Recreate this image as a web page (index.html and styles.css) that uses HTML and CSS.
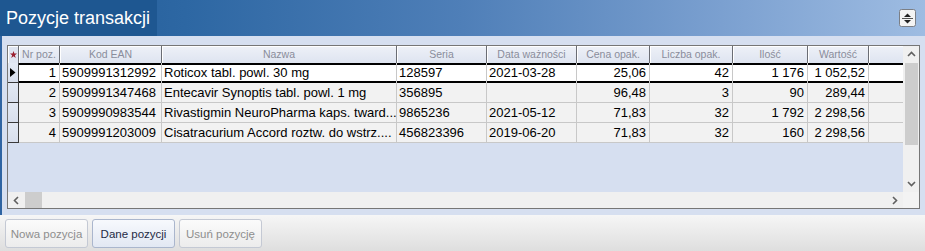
FILE: index.html
```html
<!DOCTYPE html>
<html lang="pl">
<head>
<meta charset="utf-8">
<title>Pozycje transakcji</title>
<link rel="stylesheet" href="styles.css">
</head>
<body>
<div class="window">
  <header class="titlebar">
    <h1 class="title">Pozycje transakcji</h1>
    <button class="toggle" aria-label="Zwiń">
      <svg width="17" height="18" viewBox="0 0 17 18">
        <rect x="0.5" y="0.5" width="16" height="17" rx="2" fill="#f4f4f4" stroke="#7b7f86"/>
        <polygon points="5,8 12,8 8.5,4.5" fill="#222"/>
        <line x1="3" y1="9.5" x2="14" y2="9.5" stroke="#555" stroke-width="1"/>
        <polygon points="5,11 12,11 8.5,14.5" fill="#222"/>
      </svg>
    </button>
  </header>

  <section class="panel">
    <div class="grid">
      <div class="grid-main">
        <div class="grid-body">
          <div class="row head">
            <div class="hcell ind-h">
              <svg width="7" height="7" viewBox="0 0 7 7"><polygon points="3.5,0 4.4,2.5 7,2.6 4.9,4.2 5.7,7 3.5,5.3 1.3,7 2.1,4.2 0,2.6 2.6,2.5" fill="#9a1f2e"/></svg>
            </div>
            <div class="hcell">Nr poz.</div>
            <div class="hcell">Kod EAN</div>
            <div class="hcell">Nazwa</div>
            <div class="hcell">Seria</div>
            <div class="hcell">Data ważności</div>
            <div class="hcell">Cena opak.</div>
            <div class="hcell">Liczba opak.</div>
            <div class="hcell">Ilość</div>
            <div class="hcell">Wartość</div>
            <div class="hcell filler"></div>
          </div>

          <div class="row sel">
            <div class="cell ind">
              <svg width="6" height="9" viewBox="0 0 6 9"><polygon points="0,0 5.5,4.5 0,9" fill="#000"/></svg>
            </div>
            <div class="cell num">1</div>
            <div class="cell">5909991312992</div>
            <div class="cell">Roticox tabl. powl. 30 mg</div>
            <div class="cell">128597</div>
            <div class="cell">2021-03-28</div>
            <div class="cell num">25,06</div>
            <div class="cell num">42</div>
            <div class="cell num">1 176</div>
            <div class="cell num">1 052,52</div>
            <div class="cell filler"></div>
          </div>

          <div class="row">
            <div class="cell ind"></div>
            <div class="cell num">2</div>
            <div class="cell">5909991347468</div>
            <div class="cell">Entecavir Synoptis tabl. powl. 1 mg</div>
            <div class="cell">356895</div>
            <div class="cell"></div>
            <div class="cell num">96,48</div>
            <div class="cell num">3</div>
            <div class="cell num">90</div>
            <div class="cell num">289,44</div>
            <div class="cell filler"></div>
          </div>

          <div class="row">
            <div class="cell ind"></div>
            <div class="cell num">3</div>
            <div class="cell">5909990983544</div>
            <div class="cell">Rivastigmin NeuroPharma kaps. tward...</div>
            <div class="cell">9865236</div>
            <div class="cell">2021-05-12</div>
            <div class="cell num">71,83</div>
            <div class="cell num">32</div>
            <div class="cell num">1 792</div>
            <div class="cell num">2 298,56</div>
            <div class="cell filler"></div>
          </div>

          <div class="row">
            <div class="cell ind"></div>
            <div class="cell num">4</div>
            <div class="cell">5909991203009</div>
            <div class="cell">Cisatracurium Accord roztw. do wstrz....</div>
            <div class="cell">456823396</div>
            <div class="cell">2019-06-20</div>
            <div class="cell num">71,83</div>
            <div class="cell num">32</div>
            <div class="cell num">160</div>
            <div class="cell num">2 298,56</div>
            <div class="cell filler"></div>
          </div>
        </div>

        <div class="vscroll">
          <span class="sb-btn">
            <svg width="9" height="6" viewBox="0 0 9 6"><polyline points="1,5 4.5,1.5 8,5" fill="none" stroke="#606060" stroke-width="1.6"/></svg>
          </span>
          <span class="vtrack"><span class="vthumb"></span></span>
          <span class="sb-btn">
            <svg width="9" height="6" viewBox="0 0 9 6"><polyline points="1,1 4.5,4.5 8,1" fill="none" stroke="#606060" stroke-width="1.6"/></svg>
          </span>
        </div>
      </div>

      <div class="hscroll-row">
        <div class="hscroll">
          <span class="sb-btn">
            <svg width="6" height="9" viewBox="0 0 6 9"><polyline points="5,1 1.5,4.5 5,8" fill="none" stroke="#606060" stroke-width="1.6"/></svg>
          </span>
          <span class="hthumb"></span>
          <span class="htrack"></span>
          <span class="sb-btn">
            <svg width="6" height="9" viewBox="0 0 6 9"><polyline points="1,1 4.5,4.5 1,8" fill="none" stroke="#606060" stroke-width="1.6"/></svg>
          </span>
        </div>
        <div class="corner"></div>
      </div>
    </div>
  </section>

  <footer class="actions">
    <button class="btn">Nowa pozycja</button>
    <button class="btn active">Dane pozycji</button>
    <button class="btn">Usuń pozycję</button>
  </footer>
</div>
</body>
</html>
```

FILE: styles.css
```css
html, body {
  margin: 0;
  padding: 0;
}

body {
  width: 925px;
  height: 251px;
  overflow: hidden;
  font-family: "Liberation Sans", Arial, sans-serif;
  background: #e2e2e2;
}

.window {
  display: flex;
  flex-direction: column;
  width: 925px;
  height: 251px;
}

/* ---------- title bar ---------- */
.titlebar {
  height: 36px;
  display: flex;
  align-items: center;
  justify-content: space-between;
  background: linear-gradient(to right, #1f5994 0%, #2d67a3 20%, #4f7fb8 50%, #7ba0d0 78%, #9ebce2 100%);
}

.title {
  margin: 0;
  height: 36px;
  line-height: 36px;
  padding: 0 7px 0 6px;
  background: #1e5791;
  color: #ffffff;
  font-weight: normal;
  font-size: 18px;
  font-family: "Liberation Sans", Arial, sans-serif;
}

.toggle {
  margin-right: 9px;
  padding: 0;
  border: 0;
  background: none;
  width: 17px;
  height: 18px;
  display: flex;
}

/* ---------- panel / grid ---------- */
.panel {
  background: #d6dff0;
  border-left: 2px solid #2f64a2;
  padding: 9px 5px 6px 5px;
}

.grid {
  box-sizing: border-box;
  height: 164px;
  border: 1px solid #767676;
  display: flex;
  flex-direction: column;
  background: #d6dff0;
}

.grid-main {
  flex: 1;
  display: flex;
  min-height: 0;
}

.grid-body {
  flex: 1;
  min-width: 0;
}

.row {
  display: grid;
  grid-template-columns: 11px 41px 102px 235px 90px 90px 73px 83px 75px 61px 34px;
  height: 20px;
}

.row.head {
  height: 17px;
}

.hcell {
  box-sizing: border-box;
  background: linear-gradient(#eef1f8, #dee4f0);
  border-right: 1px solid #6a6d74;
  box-shadow: inset 1px 1px 0 #ffffff;
  color: #8a8d9b;
  font-size: 10.5px;
  line-height: 17px;
  text-align: center;
  white-space: nowrap;
  overflow: hidden;
}

.hcell.filler {
  border-right: none;
}

.ind-h {
  display: flex;
  align-items: center;
  justify-content: center;
  background: #dfe5f1;
}

.cell {
  box-sizing: border-box;
  background: #f2f2f2;
  border-right: 1px solid #c8c8c8;
  border-bottom: 1px solid #c8c8c8;
  color: #000;
  font-size: 13px;
  line-height: 19px;
  padding: 0 2px;
  white-space: nowrap;
  overflow: hidden;
}

.cell.num {
  text-align: right;
  padding: 0 3px 0 2px;
}

.cell.filler {
  border-right: none;
}

.row.sel .cell {
  background: #ffffff;
  border-bottom: none;
  box-shadow: inset 0 2px 0 #000, inset 0 -2px 0 #000;
  line-height: 20px;
}

.cell.ind,
.row.sel .cell.ind {
  background: linear-gradient(#e3e9f4, #d8dfed);
  border-right: 1px solid #3a3a3a;
  border-bottom: 1px solid #3a3a3a;
  box-shadow: none;
  padding: 0;
  display: flex;
  align-items: center;
  justify-content: center;
}

/* ---------- scrollbars ---------- */
.vscroll {
  width: 16px;
  display: flex;
  flex-direction: column;
  background: #f0f0f0;
}

.sb-btn {
  width: 16px;
  height: 16px;
  flex: none;
  display: flex;
  align-items: center;
  justify-content: center;
}

.vtrack {
  flex: 1;
  display: flex;
  flex-direction: column;
  align-items: center;
}

.vthumb {
  margin-top: 1px;
  width: 13px;
  height: 82px;
  background: #cdcdcd;
}

.hscroll-row {
  height: 16px;
  display: flex;
}

.hscroll {
  flex: 1;
  display: flex;
  background: #f0f0f0;
}

.hthumb {
  margin-left: 1px;
  width: 17px;
  background: #cdcdcd;
}

.htrack {
  flex: 1;
}

.corner {
  width: 16px;
  background: #f3f3f3;
}

/* ---------- action buttons ---------- */
.actions {
  flex: 1;
  box-sizing: border-box;
  display: flex;
  align-items: flex-start;
  gap: 4px;
  padding: 4px 5px 0 5px;
  background: linear-gradient(#f6f6f6, #dedede);
}

.btn {
  width: 83px;
  height: 29px;
  padding: 0;
  border: 1px solid #c4c9d4;
  border-radius: 3px;
  background: linear-gradient(#fbfbfb, #ececec);
  color: #8e8e8e;
  font-family: "Liberation Sans", Arial, sans-serif;
  font-size: 11.5px;
}

.btn.active {
  color: #1f2b45;
  border-color: #aab6cd;
  background: linear-gradient(#f7f9fd, #e2e8f3);
}
```
